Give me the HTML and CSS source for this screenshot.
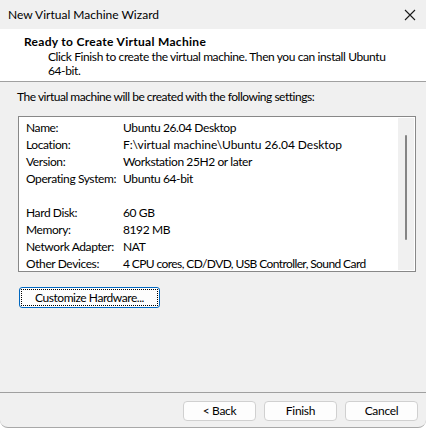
FILE: index.html
```html
<!DOCTYPE html>
<html>
<head>
<meta charset="utf-8">
<link rel="stylesheet" href="styles.css">
</head>
<body>
<div class="window">
  <div class="titlebar">
    <span class="title">New Virtual Machine Wizard</span>
    <svg class="close" width="12" height="12" viewBox="0 0 12 12"><path d="M1 1 L11 11 M11 1 L1 11" stroke="#1a1a1a" stroke-width="1.1" fill="none"/></svg>
  </div>
  <div class="header">
    <div class="h-title">Ready to Create Virtual Machine</div>
    <div class="h-sub">Click Finish to create the virtual machine. Then you can install Ubuntu 64-bit.</div>
  </div>
  <div class="content">
    <div class="intro">The virtual machine will be created with the following settings:</div>
    <div class="listbox">
      <div class="rows">
        <div class="row"><span class="k">Name:</span><span class="v">Ubuntu 26.04 Desktop</span></div>
        <div class="row"><span class="k">Location:</span><span class="v wide">F:\virtual machine\Ubuntu 26.04 Desktop</span></div>
        <div class="row"><span class="k">Version:</span><span class="v">Workstation 25H2 or later</span></div>
        <div class="row"><span class="k">Operating System:</span><span class="v">Ubuntu 64-bit</span></div>
        <div class="row"></div>
        <div class="row"><span class="k">Hard Disk:</span><span class="v">60 GB</span></div>
        <div class="row"><span class="k">Memory:</span><span class="v">8192 MB</span></div>
        <div class="row"><span class="k">Network Adapter:</span><span class="v">NAT</span></div>
        <div class="row"><span class="k">Other Devices:</span><span class="v narrow">4 CPU cores, CD/DVD, USB Controller, Sound Card</span></div>
      </div>
      <div class="scrollbar"><div class="thumb"></div></div>
    </div>
    <button class="btn custom"><span class="focus">Customize Hardware...</span></button>
  </div>
  <div class="footer">
    <button class="btn">&lt; Back</button>
    <button class="btn">Finish</button>
    <button class="btn">Cancel</button>
  </div>
</div>
</body>
</html>
```
FILE: styles.css
```css
html, body {
  margin: 0;
  padding: 0;
  background: #ffffff;
}
body {
  font-family: Lato, "Noto Sans", sans-serif;
  font-size: 12px;
  letter-spacing: -0.4px;
  color: #000;
}
.window {
  width: 426px;
  height: 428px;
  box-sizing: border-box;
  background: #f0f0f0;
  border-bottom: 1px solid #a8a8a8;
  border-radius: 0 0 8px 8px;
  display: flex;
  flex-direction: column;
  overflow: hidden;
}
.titlebar {
  height: 29px;
  display: flex;
  align-items: center;
  justify-content: space-between;
  padding: 0 10px 0 8px;
  flex: none;
}
.title {
  line-height: 16px;
  letter-spacing: 0;
}
.close {
  display: block;
}
.header {
  background: #fff;
  height: 53px;
  border-bottom: 1px solid #a0a0a0;
  padding: 5px 0 0 24px;
  box-sizing: border-box;
  flex: none;
}
.h-title {
  font-weight: bold;
  line-height: 16px;
  letter-spacing: 0.3px;
}
.h-sub {
  padding-left: 24px;
  line-height: 14px;
  width: 338px;
}
.content {
  height: 310px;
  padding: 7px 0 0 17px;
  box-sizing: border-box;
  display: flex;
  flex-direction: column;
  align-items: flex-start;
  flex: none;
}
.intro {
  line-height: 16px;
  letter-spacing: -0.48px;
}
.listbox {
  margin-top: 11px;
  margin-left: 1px;
  width: 398px;
  height: 156px;
  box-sizing: border-box;
  border: 1px solid #888888;
  background: #fff;
  display: flex;
  overflow: hidden;
}
.rows {
  flex: 1;
  padding: 2px 0 0 7px;
}
.row {
  height: 17px;
  line-height: 17px;
  display: flex;
  white-space: nowrap;
}
.k {
  width: 97px;
  flex: none;
}
.wide {
  letter-spacing: -0.05px;
}
.narrow {
  letter-spacing: -0.6px;
}
.scrollbar {
  width: 16px;
  background: #f0f0f0;
  margin: 1px 1px 1px 0;
  display: flex;
  justify-content: center;
  padding-top: 17px;
  box-sizing: border-box;
  flex: none;
}
.thumb {
  width: 2px;
  height: 105px;
  background: #858585;
  border-radius: 1px;
}
.btn {
  font-family: inherit;
  font-size: 12px;
  letter-spacing: -0.3px;
  color: #000;
  background: #fdfdfd;
  border: 1px solid #d0d0d0;
  border-radius: 4px;
  width: 73px;
  height: 20px;
  padding: 0;
  line-height: 16px;
}
.custom {
  margin-top: 15px;
  margin-left: 2px;
  width: 141px;
  height: 21px;
  border: 1px solid #0067c0;
  border-radius: 3px;
  padding: 1px;
  display: flex;
  letter-spacing: -0.45px;
}
.focus {
  flex: 1;
  border: 1px dotted #000;
  display: flex;
  align-items: center;
  justify-content: center;
}
.footer {
  border-top: 1px solid #a0a0a0;
  padding: 8px 8px 0 0;
  display: flex;
  justify-content: flex-end;
  gap: 8px;
  flex: none;
}
```
